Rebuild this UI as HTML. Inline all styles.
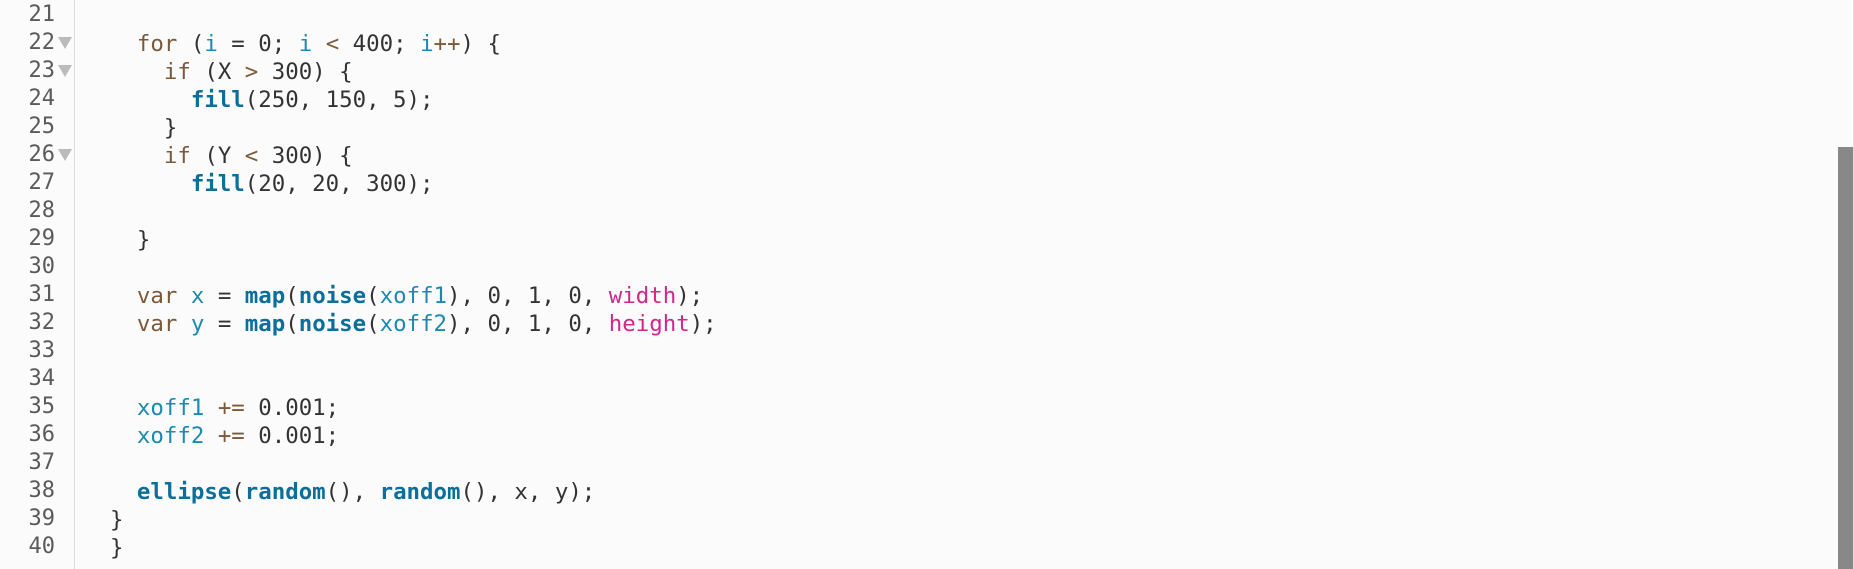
<!DOCTYPE html>
<html><head><style>
html,body{margin:0;padding:0;background:#fbfbfb;width:1854px;height:569px;overflow:hidden}
.gut{position:absolute;left:0;top:0;width:74px;height:569px;border-right:1px solid #ddd;background:#fbfbfb}
.ln{position:absolute;left:0;width:55px;text-align:right;color:#5a5a5a;font:22px/28px "DejaVu Sans Mono",monospace}
.tri{position:absolute;left:58px;width:0;height:0;border-left:7px solid transparent;border-right:7px solid transparent;border-top:12px solid #bbb}
.code{position:absolute;left:83px;top:2px;font:22.4px/28px "DejaVu Sans Mono","Liberation Mono",monospace;color:#333;white-space:pre}
.k{color:#7a5a3a}.v{color:#1a8ab0}.f{color:#0b6f9a;font-weight:bold}.p{color:#d4258a}
.sb{position:absolute;left:1838px;top:147px;width:15px;height:422px;background:#888}
.edge{position:absolute;left:1853px;top:0;width:1px;height:569px;background:#ddd}
</style></head><body>
<div class="gut"></div>
<div class="ln" style="top:1px">21<br>22<br>23<br>24<br>25<br>26<br>27<br>28<br>29<br>30<br>31<br>32<br>33<br>34<br>35<br>36<br>37<br>38<br>39<br>40</div>
<div class="tri" style="top:37px"></div>
<div class="tri" style="top:65px"></div>
<div class="tri" style="top:149px"></div>
<div class="code">
    <span class="k">for</span> (<span class="v">i</span> = 0; <span class="v">i</span> <span class="k">&lt;</span> 400; <span class="v">i</span><span class="k">++</span>) {
      <span class="k">if</span> (X <span class="k">&gt;</span> 300) {
        <span class="f">fill</span>(250, 150, 5);
      }
      <span class="k">if</span> (Y <span class="k">&lt;</span> 300) {
        <span class="f">fill</span>(20, 20, 300);

    }

    <span class="k">var</span> <span class="v">x</span> = <span class="f">map</span>(<span class="f">noise</span>(<span class="v">xoff1</span>), 0, 1, 0, <span class="p">width</span>);
    <span class="k">var</span> <span class="v">y</span> = <span class="f">map</span>(<span class="f">noise</span>(<span class="v">xoff2</span>), 0, 1, 0, <span class="p">height</span>);


    <span class="v">xoff1</span> <span class="k">+=</span> 0.001;
    <span class="v">xoff2</span> <span class="k">+=</span> 0.001;

    <span class="f">ellipse</span>(<span class="f">random</span>(), <span class="f">random</span>(), x, y);
  }
  }</div>
<div class="sb"></div>
<div class="edge"></div>
</body></html>
